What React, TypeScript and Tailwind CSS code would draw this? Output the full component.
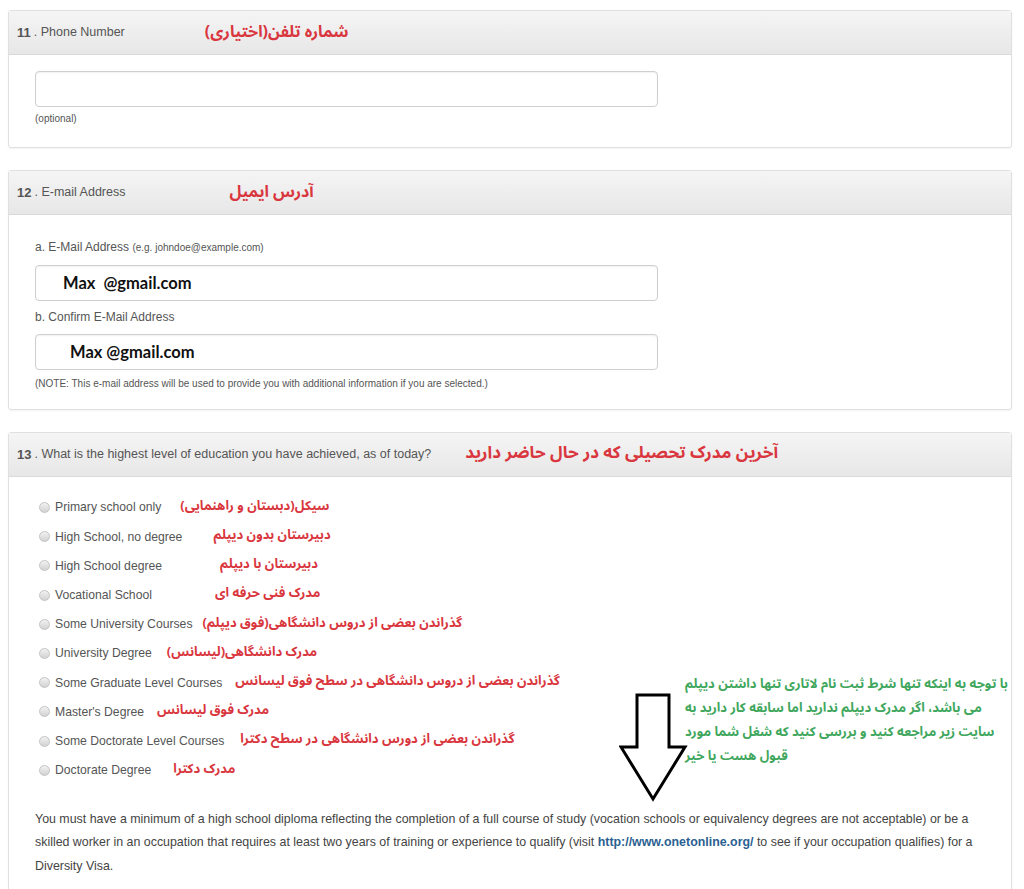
const fa = "font-['Noto_Sans_Arabic','DejaVu_Sans',sans-serif]";

interface Level {
  label: string;
  note: string;
  gap: string;
}

const levels: Level[] = [
  { label: 'Primary school only', note: 'سیکل(دبستان و راهنمایی)', gap: 'ml-[19px]' },
  { label: 'High School, no degree', note: 'دبیرستان بدون دیپلم', gap: 'ml-[31px]' },
  { label: 'High School degree', note: 'دبیرستان با دیپلم', gap: 'ml-[58px]' },
  { label: 'Vocational School', note: 'مدرک فنی حرفه ای', gap: 'ml-[63px]' },
  { label: 'Some University Courses', note: 'گذراندن بعضی از دروس دانشگاهی(فوق دیپلم)', gap: 'ml-[10px]' },
  { label: 'University Degree', note: 'مدرک دانشگاهی(لیسانس)', gap: 'ml-[15px]' },
  { label: 'Some Graduate Level Courses', note: 'گذراندن بعضی از دروس دانشگاهی در سطح فوق لیسانس', gap: 'ml-[13px]' },
  { label: "Master's Degree", note: 'مدرک فوق لیسانس', gap: 'ml-[13px]' },
  { label: 'Some Doctorate Level Courses', note: 'گذراندن بعضی از دورس دانشگاهی در سطح دکترا', gap: 'ml-[16px]' },
  { label: 'Doctorate Degree', note: 'مدرک دکترا', gap: 'ml-[22px]' },
];

function Header({ num, title, note, gap, size }: { num: string; title: string; note: string; gap: string; size: string }) {
  return (
    <div className="flex items-center h-[44px] pl-2 bg-gradient-to-b from-[#f5f5f5] to-[#e7e7e7] border-b border-[#dadada]">
      <span className="text-[13px] font-bold text-[#555]">{num}</span>
      <span className="text-[12.5px] text-[#555] ml-[3px]">. {title}</span>
      <span dir="rtl" className={`${fa} ${gap} ${size} font-bold text-[#d9363e] -mt-[2px] whitespace-nowrap`}>
        {note}
      </span>
    </div>
  );
}

function Input({ value, indent }: { value?: string; indent?: string }) {
  return (
    <div className="w-[623px] h-[36px] rounded-[4px] border border-[#cfcfcf] bg-white shadow-[inset_0_1px_2px_rgba(0,0,0,0.06)] flex items-center">
      {value && (
        <span className={`${indent} font-['Lato',sans-serif] font-bold text-[16.5px] text-[#111] whitespace-pre`}>{value}</span>
      )}
    </div>
  );
}

export default function App() {
  return (
    <div className="min-h-screen bg-white pt-[10px] pl-2 pr-3 font-['Liberation_Sans',Arial,sans-serif] overflow-hidden h-[889px]">
      {/* 11 */}
      <div className="border border-[#e0e0e0] rounded-[3px] shadow-[0_1px_2px_rgba(0,0,0,0.05)]">
        <Header num="11" title="Phone Number" note="شماره تلفن(اختیاری)" gap="ml-[80px]" size="text-[16px]" />
        <div className="pl-[26px] pt-[16px] pb-[21px]">
          <Input />
          <div className="mt-[5px] text-[10px] leading-[14px] text-[#555]">(optional)</div>
        </div>
      </div>

      {/* 12 */}
      <div className="mt-[22px] border border-[#e0e0e0] rounded-[3px] shadow-[0_1px_2px_rgba(0,0,0,0.05)]">
        <Header num="12" title="E-mail Address" note="آدرس ایمیل" gap="ml-[104px]" size="text-[16px]" />
        <div className="pl-[26px] pt-[24px] pb-[18px]">
          <div className="text-[12px] leading-[16px] text-[#555]">
            a. E-Mail Address <span className="text-[10px]">(e.g. johndoe@example.com)</span>
          </div>
          <div className="mt-[9px]">
            <Input value="Max  @gmail.com" indent="ml-[27px]" />
          </div>
          <div className="mt-[8px] text-[12px] leading-[16px] text-[#555]">b. Confirm E-Mail Address</div>
          <div className="mt-[9px]">
            <Input value="Max @gmail.com" indent="ml-[34px]" />
          </div>
          <div className="mt-[7px] text-[10px] leading-[14px] text-[#555]">
            (NOTE: This e-mail address will be used to provide you with additional information if you are selected.)
          </div>
        </div>
      </div>

      {/* 13 */}
      <div className="mt-[22px] border border-[#e0e0e0] rounded-[3px] shadow-[0_1px_2px_rgba(0,0,0,0.05)]">
        <Header
          num="13"
          title="What is the highest level of education you have achieved, as of today?"
          note="آخرین مدرک تحصیلی که در حال حاضر دارید"
          gap="ml-[34px]"
          size="text-[17px]"
        />
        <div className="relative pl-[26px] pr-[27px] pt-[16px] pb-[40px]">
          <div className="flex flex-col">
            {levels.map((l) => (
              <div key={l.label} className="flex items-center h-[29.2px]">
                <span className="ml-[4px] w-[11px] h-[11px] rounded-full border border-[#c4c4c4] bg-gradient-to-b from-[#f2f2f2] to-[#d2d2d2]" />
                <span className="ml-[5px] text-[12.2px] text-[#555]">{l.label}</span>
                <span dir="rtl" className={`${fa} ${l.gap} text-[13px] font-bold text-[#d9363e] -mt-[2px] whitespace-nowrap`}>
                  {l.note}
                </span>
              </div>
            ))}
          </div>

          <p className="mt-[23px] text-[12.4px] leading-[23.5px] text-[#444]">
            You must have a minimum of a high school diploma reflecting the completion of a full course of study (vocation
            schools or equivalency degrees are not acceptable) or be a skilled worker in an occupation that requires at least
            two years of training or experience to qualify (visit{' '}
            <a className="font-bold text-[#2b5f92]">http://www.onetonline.org/</a> to see if your occupation qualifies) for a
            Diversity Visa.
          </p>

          {/* hand-drawn annotation arrow */}
          <svg className="absolute left-[610px] top-[216px]" width="70" height="110" viewBox="0 0 70 110">
            <path
              d="M18 2 H50 V54 H66 L34 106 L2 54 H18 Z"
              fill="white"
              stroke="black"
              strokeWidth="3"
              strokeLinejoin="miter"
            />
          </svg>

          <div
            dir="rtl"
            className={`${fa} absolute left-[676px] top-[195px] text-left text-[13px] leading-[24px] font-bold text-[#3fa75d] whitespace-nowrap`}
          >
            <div>با توجه به اینکه تنها شرط ثبت نام لاتاری تنها داشتن دیپلم</div>
            <div>می باشد، اگر مدرک دیپلم ندارید اما سابقه کار دارید به</div>
            <div>سایت زیر مراجعه کنید و بررسی کنید که شغل شما مورد</div>
            <div>قبول هست یا خیر</div>
          </div>
        </div>
      </div>
    </div>
  );
}
